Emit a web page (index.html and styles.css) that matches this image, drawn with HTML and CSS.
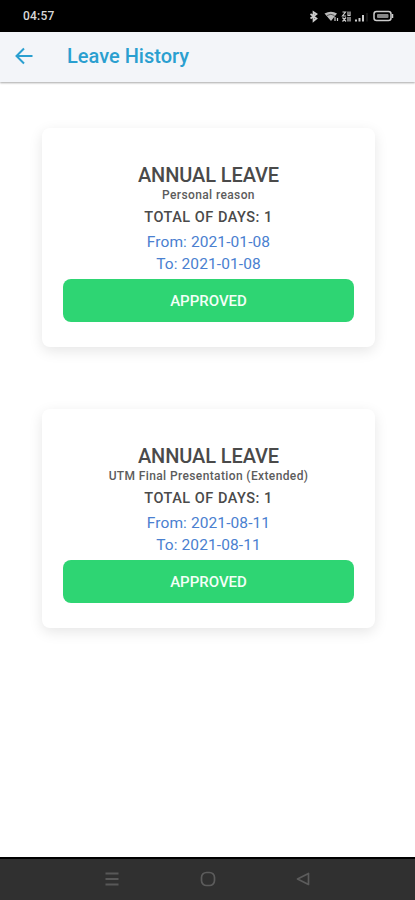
FILE: index.html
```html
<!DOCTYPE html>
<html lang="en">
<head>
<meta charset="utf-8">
<title>Leave History</title>
<link rel="stylesheet" href="styles.css">
</head>
<body>
<div class="screen">
  <div class="status">
    <span class="clock">04:57</span>
    <svg class="indicators" width="86" height="14" viewBox="0 0 86 14" fill="none" stroke="#ccc">
      <path d="M2.500 5 8.500 9.500 5.500 12V3L8.500 5 2.500 9.500" stroke-width="1.700"/>
      <path d="M16.500 4.500Q23 1 29 4.500L23 12Z" fill="#bbb" stroke="none"/>
      <path d="M19 6.500Q23 4 26.500 6.500" stroke="#555"/>
      <path d="M27 8v4M29.500 9v3" stroke-width="1.200"/>
      <path d="M34.500 3h3L34.500 7H38M40 2.500v4h2v-4M34.500 8.500l3.500 4M38 8.500l-3.500 4M40 8v4.500M42 8v4.500" stroke-width="1.200"/>
      <path d="M48 12.500v-2M51.500 12.500V9M55 12.500V6" stroke-width="2"/>
      <path d="M59 12.500V4" stroke="#333"/>
      <rect x="66" y="2.500" width="17" height="9" rx="2.500" stroke-width="1.500"/>
      <path d="M84.500 5v4" stroke-width="1.500"/>
      <rect x="69" y="5" width="11.500" height="4" rx="1" fill="#888" stroke="none"/>
    </svg>
  </div>
  <header class="appbar">
    <svg class="back" width="18" height="18" viewBox="0 0 18 18" fill="none" stroke="#2a9fd0" stroke-width="2"><path d="M17.500 9H2M9 1.500 1.500 9 9 16.500"/></svg>
    <h1 class="title">Leave History</h1>
  </header>
  <main class="list">
    <article class="card">
      <h2 class="type">ANNUAL LEAVE</h2>
      <p class="reason">Personal reason</p>
      <p class="total">TOTAL OF DAYS: 1</p>
      <p class="date">From: 2021-01-08</p>
      <p class="date">To: 2021-01-08</p>
      <div class="state">APPROVED</div>
    </article>
    <article class="card">
      <h2 class="type">ANNUAL LEAVE</h2>
      <p class="reason">UTM Final Presentation (Extended)</p>
      <p class="total">TOTAL OF DAYS: 1</p>
      <p class="date">From: 2021-08-11</p>
      <p class="date">To: 2021-08-11</p>
      <div class="state">APPROVED</div>
    </article>
  </main>
  <nav class="navbar">
    <svg width="14" height="16" viewBox="0 0 14 16" stroke="#585858" stroke-width="2"><path d="M.5 2.500h13M.5 8h13M.5 13.500h13"/></svg>
    <svg width="16" height="16" viewBox="0 0 16 16" fill="none" stroke="#5c5c5c" stroke-width="1.700"><rect x="1.500" y="1.500" width="13" height="13" rx="5"/></svg>
    <svg width="14" height="16" viewBox="0 0 14 16" fill="none" stroke="#5c5c5c" stroke-width="1.700" stroke-linejoin="round"><path d="M12.500 2.500v11L1.500 8Z"/></svg>
  </nav>
</div>
</body>
</html>
```
FILE: styles.css
```css
* { box-sizing: border-box; margin: 0; padding: 0; }
body { background: #fff; font-family: Roboto, "Liberation Sans", sans-serif; }
.screen { width: 415px; height: 900px; display: flex; flex-direction: column; overflow: hidden; }
.status { height: 32px; background: #000; display: flex; align-items: center; justify-content: space-between; padding: 0 21px 0 23px; }
.clock { color: #d8d8d8; font-size: 12px; font-weight: 500; letter-spacing: .2px; line-height: 32px; }
.indicators { display: block; }
.appbar { height: 50px; background: #f3f5f9; display: flex; align-items: center; padding: 0 15px 2px; box-shadow: 0 1px 2px rgba(0,0,0,.35); }
.back { display: block; margin-right: 34px; }
.title { color: #2a9fd0; font-size: 20px; font-weight: 500; line-height: 48px; }
.list { flex: 1; padding: 46px 40px 0 42px; display: flex; flex-direction: column; gap: 62px; }
.card { height: 219px; border-radius: 8px; padding: 34px 21px 0; text-align: center; background: #fff; box-shadow: 0 4px 14px rgba(0,0,0,.1); }
.type { font-size: 20px; font-weight: 500; line-height: 26px; letter-spacing: -.1px; color: #4a4a4a; }
.reason { font-size: 12px; font-weight: 500; line-height: 14px; letter-spacing: .38px; color: #5c5c5c; }
.total { padding-top: 3px; font-size: 14.500px; font-weight: 500; line-height: 26px; letter-spacing: .5px; color: #4a4a4a; }
.date { font-size: 15.500px; line-height: 22px; letter-spacing: .1px; color: #4a80d0; }
.state { height: 43px; margin-top: 4px; border-radius: 8px; background: #2ed573; color: #f3fff7; font-size: 15px; font-weight: 500; line-height: 45px; }
.navbar { height: 43px; border-top: 2px solid #000; background: #303030; display: flex; justify-content: space-between; align-items: center; padding: 0 105px 2px; }
```
